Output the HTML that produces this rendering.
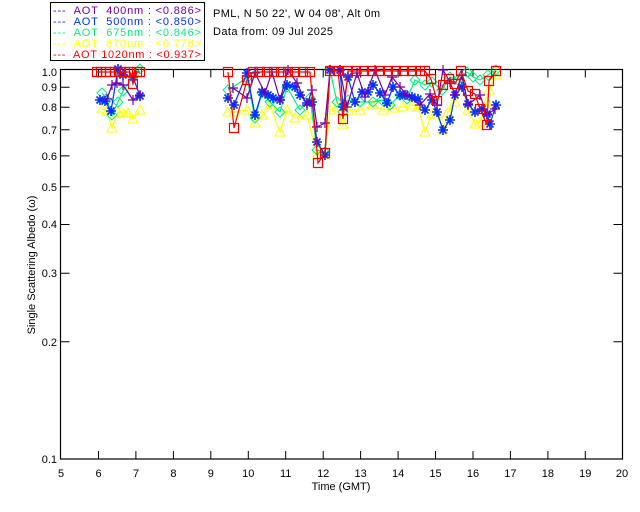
<!DOCTYPE html>
<html><head><meta charset="utf-8"><style>
html,body{margin:0;padding:0;background:#fff;width:640px;height:512px;overflow:hidden}
svg{display:block}
text{font-family:"Liberation Sans",sans-serif;font-size:11px}
</style></head><body>
<svg width="640" height="512" viewBox="0 0 640 512" xmlns="http://www.w3.org/2000/svg">
<defs>
<marker id="mp" markerUnits="userSpaceOnUse" markerWidth="12" markerHeight="12" refX="6" refY="6" overflow="visible"><path d="M1 6H11M6 1V11" stroke="#7000b0" stroke-width="1.2" fill="none"/></marker>
<marker id="mb" markerUnits="userSpaceOnUse" markerWidth="12" markerHeight="12" refX="6" refY="6" overflow="visible"><path d="M1 6H11M6 1V11M2.5 2.5L9.5 9.5M9.5 2.5L2.5 9.5" stroke="#0030ff" stroke-width="1.6" fill="none"/></marker>
<marker id="mg" markerUnits="userSpaceOnUse" markerWidth="12" markerHeight="12" refX="6" refY="6" overflow="visible"><path d="M6 1L11 6L6 11L1 6Z" stroke="#00f080" stroke-width="1" fill="none"/></marker>
<marker id="my" markerUnits="userSpaceOnUse" markerWidth="12" markerHeight="12" refX="6" refY="6" overflow="visible"><path d="M6 1L11 10H1Z" stroke="#ffff00" stroke-width="1" fill="none"/></marker>
<marker id="mr" markerUnits="userSpaceOnUse" markerWidth="12" markerHeight="12" refX="6" refY="6" overflow="visible"><path d="M1.5 1.5H10.5V10.5H1.5Z" stroke="#ff0000" stroke-width="1.2" fill="none"/></marker>
</defs>
<!-- legend -->
<rect x="50.5" y="2.5" width="154" height="58" fill="#fff" stroke="#000"/>
<g font-size="11">
<text x="53" y="14" fill="#7000b0" textLength="148" lengthAdjust="spacing" xml:space="preserve">---  AOT  400nm : &lt;0.886&gt;</text>
<text x="53" y="25" fill="#0030ff" textLength="148" lengthAdjust="spacing" xml:space="preserve">---  AOT  500nm : &lt;0.850&gt;</text>
<text x="53" y="36" fill="#00f080" textLength="148" lengthAdjust="spacing" xml:space="preserve">---  AOT  675nm : &lt;0.846&gt;</text>
<text x="53" y="47" fill="#ffff00" textLength="148" lengthAdjust="spacing" xml:space="preserve">---  AOT  870nm : &lt;0.778&gt;</text>
<text x="53" y="58" fill="#ff0000" textLength="148" lengthAdjust="spacing" xml:space="preserve">---  AOT 1020nm : &lt;0.937&gt;</text>
</g>
<text x="213" y="17" fill="#000" textLength="167" lengthAdjust="spacing">PML, N 50 22', W 04 08', Alt 0m</text>
<text x="213" y="35" fill="#000" textLength="120" lengthAdjust="spacing">Data from: 09 Jul 2025</text>
<!-- axes -->
<rect x="60.5" y="69.5" width="562" height="389.5" fill="none" stroke="#000" stroke-width="1.2"/>
<g stroke="#000" stroke-width="1">
<path d="M98.5 459v-8M135.9 459v-8M173.4 459v-8M210.8 459v-8M248.3 459v-8M285.7 459v-8M323.2 459v-8M360.6 459v-8M398.1 459v-8M435.5 459v-8M473 459v-8M510.4 459v-8M547.9 459v-8M585.3 459v-8"/>
<path d="M98.5 69.5v8M135.9 69.5v8M173.4 69.5v8M210.8 69.5v8M248.3 69.5v8M285.7 69.5v8M323.2 69.5v8M360.6 69.5v8M398.1 69.5v8M435.5 69.5v8M473 69.5v8M510.4 69.5v8M547.9 69.5v8M585.3 69.5v8"/>
<path d="M60.5 87.3h9M60.5 107.2h9M60.5 129.8h9M60.5 155.9h9M60.5 186.8h9M60.5 224.5h9M60.5 273.2h9M60.5 341.8h9"/>
<path d="M622.5 87.3h-9M622.5 107.2h-9M622.5 129.8h-9M622.5 155.9h-9M622.5 186.8h-9M622.5 224.5h-9M622.5 273.2h-9M622.5 341.8h-9"/>
</g>
<g fill="#000" text-anchor="end" font-size="11">
<text x="57" y="76">1.0</text><text x="57" y="91">0.9</text><text x="57" y="111">0.8</text><text x="57" y="134">0.7</text><text x="57" y="160">0.6</text><text x="57" y="191">0.5</text><text x="57" y="228">0.4</text><text x="57" y="277">0.3</text><text x="57" y="346">0.2</text><text x="57" y="463">0.1</text>
</g>
<g fill="#000" text-anchor="middle" font-size="11">
<text x="61" y="477">5</text><text x="98.5" y="477">6</text><text x="136" y="477">7</text><text x="173.4" y="477">8</text><text x="210.8" y="477">9</text><text x="248.3" y="477">10</text><text x="285.7" y="477">11</text><text x="323.2" y="477">12</text><text x="360.6" y="477">13</text><text x="398.1" y="477">14</text><text x="435.5" y="477">15</text><text x="473" y="477">16</text><text x="510.4" y="477">17</text><text x="547.9" y="477">18</text><text x="585.3" y="477">19</text><text x="622" y="477">20</text>
<text x="341" y="490">Time (GMT)</text>
</g>
<text transform="translate(35,265) rotate(-90)" text-anchor="middle" fill="#000" font-size="11">Single Scattering Albedo (ω)</text>
<!-- data -->
<g fill="none" stroke-width="1.2">
<g stroke="#ffff00" marker-start="url(#my)" marker-mid="url(#my)" marker-end="url(#my)">
<polyline points="102,109 107,111 112,128 118,112 123,113 128,113 133,119 140,110"/>
<polyline points="228,112 234,112 247,110 255,123 262,115 270,105 280,132 287,110 295,118 307,115 317,155 325,155 330,110 337,107 343,125 348,110 360,110 373,105 383,110 393,108 403,107 412,105 418,107 425,132 432,114 437,114 443,130 448,112 455,102 462,85 468,110 475,124 480,122 487,102 489,90 496,75"/>
</g>
<g stroke="#00f080" marker-start="url(#mg)" marker-mid="url(#mg)" marker-end="url(#mg)">
<polyline points="102,93 107,100 112,115 118,102 123,91 133,77 140,69"/>
<polyline points="228,90 247,78 255,118 262,93 270,102 280,112 287,87 300,110 310,98 317,150 325,152 330,70 337,102 343,112 348,100 360,102 373,102 382,100 390,105 400,95 407,99 415,80 425,85 432,82 442,90 450,77 458,80 467,72 473,77 480,80 488,75 496,70"/>
</g>
<g stroke="#0030ff" marker-start="url(#mb)" marker-mid="url(#mb)" marker-end="url(#mb)">
<polyline points="100,100 105,101 111,111 118,69 123,75 133,77 140,96"/>
<polyline points="228,98 234,105 247,73 255,115 262,92 268,95 273,98 280,100 287,85 295,87 300,95 307,103 312,102 317,142 325,155 330,70 340,70 343,107 348,77 355,102 362,92 368,92 373,85 380,93 387,103 393,87 400,95 405,95 412,97 418,99 425,110 432,100 437,112 443,130 450,120 455,95 462,87 468,104 475,112 482,109 487,114 490,124 496,105"/>
</g>
<g stroke="#7000b0" marker-start="url(#mp)" marker-mid="url(#mp)" marker-end="url(#mp)">
<polyline points="107,99 112,85 117,83 123,85 133,100 140,95"/>
<polyline points="233,88 247,98 255,73 265,93 272,72 280,100 288,70 297,83 307,105 312,90 317,127 325,123 330,70 340,70 347,107 357,73 365,97 375,70 385,95 392,77 400,87 407,95 420,105 430,94 437,105 443,70 450,82 455,95 462,75 468,105 480,95 487,115 495,109"/>
</g>
<g stroke="#ff0000" marker-start="url(#mr)" marker-mid="url(#mr)" marker-end="url(#mr)">
<polyline points="97,72 101,72 106,72 110,72 115,72 120,72 125,72 130,72 133,84 137,72 140,72"/>
<polyline points="228,72 234,128 247,80 253,72 260,72 267,72 274,72 281,72 288,72 295,72 303,72 310,72 318,163 325,153 330,71 338,71 343,119 348,71 356,71 364,71 372,71 380,71 388,71 396,71 404,71 412,71 420,71 425,71 431,79 437,101 443,85 449,79 455,84 461,71 468,91 475,94 480,109 487,125 489,81 496,71"/>
</g>
</g>
</svg>
</body></html>
